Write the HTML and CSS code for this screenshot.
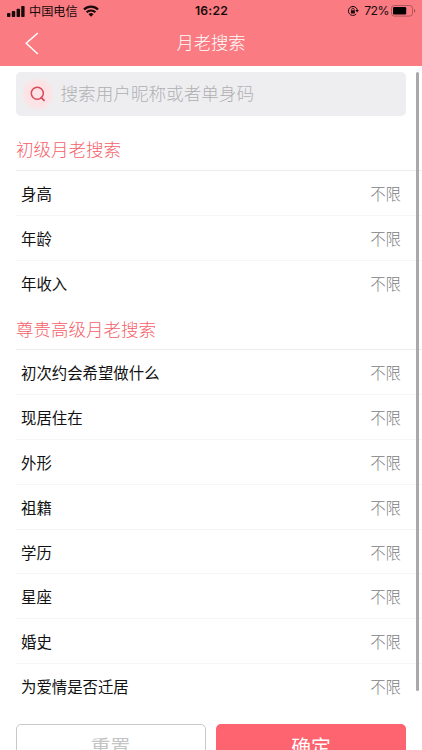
FILE: index.html
```
<!DOCTYPE html>
<html lang="zh-CN">
<head>
  <meta charset="UTF-8">
  <meta name="viewport" content="width=device-width, initial-scale=1.0">
  <title>月老搜索</title>
  <link rel="stylesheet" href="styles.css">
</head>
<body>
  <header>
    <div class="status-bar">
      <div class="status-left">
        <svg class="signal" width="18" height="11" viewBox="0 0 18 11">
          <rect x="0" y="7" width="3.4" height="4" rx="0.8"/>
          <rect x="4.8" y="5" width="3.4" height="6" rx="0.8"/>
          <rect x="9.6" y="2.8" width="3.4" height="8.2" rx="0.8"/>
          <rect x="14.2" y="0" width="3.4" height="11" rx="0.8"/>
        </svg>
        <span class="carrier">中国电信</span>
        <svg class="wifi" width="16" height="12" viewBox="0 0 16 12">
          <path d="M1 4.5a10 10 0 0 1 14 0" fill="none" stroke="#180b0c" stroke-width="2.3"/>
          <path d="M3.6 7.3a6.2 6.2 0 0 1 8.8 0" fill="none" stroke="#180b0c" stroke-width="2.1"/>
          <path d="M5.5 9.2a3.6 3.6 0 0 1 5 0L8 11.7z"/>
        </svg>
      </div>
      <span class="clock">16:22</span>
      <div class="status-right">
        <svg class="lock" width="12" height="12" viewBox="0 0 12 12">
          <path d="M9.2 9A4.5 4.5 0 1 1 10.3 5" fill="none" stroke="#180b0c" stroke-width="1"/>
          <path d="M8.4 4.9h3.4L10.2 7.4z"/>
          <rect x="3.9" y="5.3" width="4" height="3.2" rx="0.4"/>
          <path d="M4.7 5.5V4.4a1.2 1.2 0 0 1 2.4 0v1.1" fill="none" stroke="#180b0c" stroke-width="0.8"/>
        </svg>
        <span class="percent">72%</span>
        <svg class="battery" width="25" height="12" viewBox="0 0 25 12">
          <rect x="0.5" y="0.5" width="21" height="10.6" rx="2.8" fill="none" stroke="#b0575d"/>
          <rect x="2" y="2" width="13.2" height="7.6" rx="1.3" fill="#000"/>
          <path d="M23 4c1.8.6 1.8 3.2 0 3.8z" fill="#a85057"/>
        </svg>
      </div>
    </div>
    <nav>
      <svg class="back" width="14" height="23" viewBox="0 0 14 23">
        <path d="M12.8 1L1.2 11.3 12.8 22" fill="none" stroke="#fff" stroke-width="1.5"/>
      </svg>
      <h1>月老搜索</h1>
    </nav>
  </header>

  <main>
    <div class="search">
      <span class="search-icon">
        <svg width="16" height="16" viewBox="0 0 16 16">
          <circle cx="7.3" cy="7.2" r="6" fill="none" stroke="#d94a5b" stroke-width="1.5"/>
          <path d="M10.6 11.2l4 3.6" fill="none" stroke="#d94a5b" stroke-width="1.8"/>
        </svg>
      </span>
      <span class="placeholder">搜索用户昵称或者单身码</span>
    </div>

    <section>
      <h2>初级月老搜索</h2>
      <ul>
        <li><span>身高</span><span class="value">不限</span></li>
        <li><span>年龄</span><span class="value">不限</span></li>
        <li><span>年收入</span><span class="value">不限</span></li>
      </ul>
    </section>

    <section>
      <h2>尊贵高级月老搜索</h2>
      <ul>
        <li><span>初次约会希望做什么</span><span class="value">不限</span></li>
        <li><span>现居住在</span><span class="value">不限</span></li>
        <li><span>外形</span><span class="value">不限</span></li>
        <li><span>祖籍</span><span class="value">不限</span></li>
        <li><span>学历</span><span class="value">不限</span></li>
        <li><span>星座</span><span class="value">不限</span></li>
        <li><span>婚史</span><span class="value">不限</span></li>
        <li><span>为爱情是否迁居</span><span class="value">不限</span></li>
      </ul>
    </section>

    <div class="buttons">
      <button class="reset">重置</button>
      <button class="confirm">确定</button>
    </div>
    <div class="scrollbar"></div>
  </main>
</body>
</html>
```

FILE: styles.css
```
* {
  box-sizing: border-box;
}

body {
  margin: 0;
  height: 750px;
  overflow: hidden;
  background-color: #fff;
  color: #111;
  font-family: "Noto Sans CJK SC", sans-serif;
}

header {
  height: 65.5px;
  background-color: #fa7b82;
}

.status-bar {
  display: grid;
  grid-template-columns: 1fr auto 1fr;
  align-items: center;
  height: 22px;
  padding: 0 6px 0 7px;
  color: #180b0c;
  font-size: 12px;
  line-height: 22px;
}

.status-bar svg {
  fill: #180b0c;
}

.status-left,
.status-right {
  display: flex;
  align-items: center;
}

.status-right {
  justify-content: flex-end;
}

.carrier {
  margin: 0 5px 0 4px;
  font-size: 12.2px;
}

.clock {
  font-family: Inter, sans-serif;
  font-size: 12.2px;
  font-weight: 600;
  letter-spacing: 0.2px;
}

.percent {
  margin: 0 2px 0 5px;
  font-family: Inter, sans-serif;
  font-size: 12.2px;
  letter-spacing: -0.5px;
}

nav {
  display: grid;
  grid-template-columns: 1fr auto 1fr;
  align-items: center;
  height: 42px;
  padding: 0 25px;
}

h1 {
  height: 26px;
  margin: 0;
  color: #fff;
  font-size: 17.3px;
  font-weight: 300;
  line-height: 24px;
}

main {
  position: relative;
  padding-top: 6.5px;
}

.search {
  display: flex;
  align-items: center;
  height: 44px;
  margin: 0 16px 10.4px;
  padding-left: 5px;
  border-radius: 5px;
  background-color: #eeeef0;
}

.search-icon {
  display: flex;
  align-items: center;
  justify-content: center;
  width: 34px;
  height: 34px;
  margin-right: 5.5px;
  border-radius: 50%;
  background: radial-gradient(circle, #fde3e5 50%, #eeeef0 72%);
}

.placeholder {
  height: 44px;
  color: #b0b0b3;
  font-size: 17.6px;
  font-weight: 300;
  line-height: 42px;
}

section {
  margin-left: 16px;
}

h2 {
  height: 44.8px;
  margin: 0;
  border-bottom: 1px solid #ececee;
  color: #f55f6a;
  font-size: 17.5px;
  font-weight: 300;
  line-height: 45px;
}

ul {
  margin: 0;
  padding: 0;
  list-style: none;
}

li {
  display: flex;
  justify-content: space-between;
  height: 44.8px;
  padding: 0 21px 0 5px;
  border-bottom: 1px solid #f6f6f7;
  font-size: 15.4px;
  line-height: 45px;
}

li:last-child {
  border-bottom: none;
}

.value {
  color: #7c7c7e;
  font-weight: 300;
}

.buttons {
  display: grid;
  grid-template-columns: 1fr 1fr;
  gap: 10.5px;
  margin: 15px 16px 0 15.5px;
}

button {
  height: 44px;
  padding: 0;
  border: none;
  border-radius: 5px;
  font-family: inherit;
  font-size: 19.8px;
  line-height: 42px;
}

.reset {
  border: 1.5px solid #c9c9ca;
  background-color: #fff;
  color: #c4c4c5;
}

.confirm {
  background-color: #fd6470;
  color: #fff;
}

/* thin scroll indicator laid over the list */
.scrollbar {
  position: absolute;
  top: 6.5px;
  right: 3px;
  width: 3px;
  height: 619px;
  border-radius: 2px;
  background-color: #a9a9a9;
}
```
